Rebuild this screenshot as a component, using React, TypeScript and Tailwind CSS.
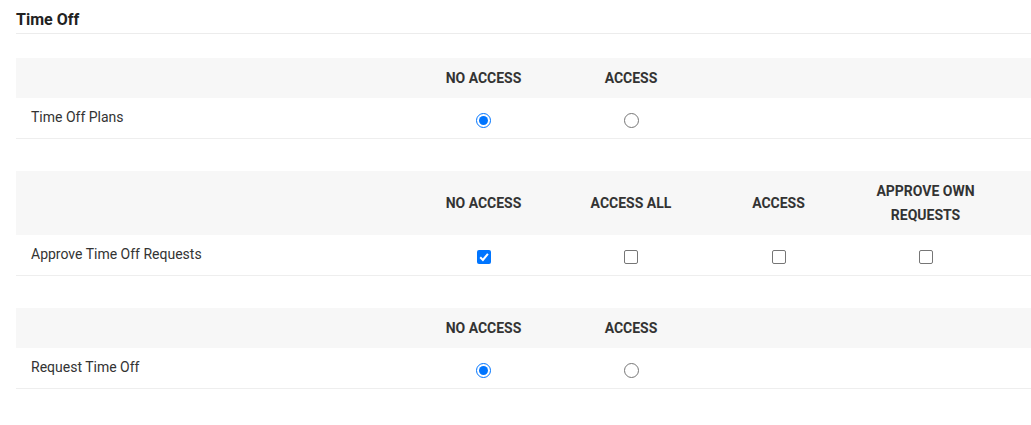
import type { ReactNode } from "react";

type Section = {
  label: string;
  kind: "radio" | "checkbox";
  columns: ReactNode[];
  checked: number;
  tall?: boolean;
};

const sections: Section[] = [
  { label: "Time Off Plans", kind: "radio", columns: ["NO ACCESS", "ACCESS"], checked: 0 },
  {
    label: "Approve Time Off Requests",
    kind: "checkbox",
    columns: [
      "NO ACCESS",
      "ACCESS ALL",
      "ACCESS",
      <>
        APPROVE OWN
        <br />
        REQUESTS
      </>,
    ],
    checked: 0,
    tall: true,
  },
  { label: "Request Time Off", kind: "radio", columns: ["NO ACCESS", "ACCESS"], checked: 0 },
];

function Radio({ on }: { on: boolean }) {
  return on ? (
    <span className="flex h-[15px] w-[15px] items-center justify-center rounded-full border border-[#0075ff] bg-white">
      <span className="h-[9px] w-[9px] rounded-full bg-[#0075ff]" />
    </span>
  ) : (
    <span className="h-[15px] w-[15px] rounded-full border border-[#767676] bg-white" />
  );
}

function Check({ on }: { on: boolean }) {
  return on ? (
    <span className="flex h-[14px] w-[14px] items-center justify-center rounded-[2px] bg-[#0075ff]">
      <svg viewBox="0 0 14 14" className="h-[14px] w-[14px]">
        <path d="M3.2 7.3 L5.9 10 L10.9 3.8" fill="none" stroke="white" strokeWidth="2" />
      </svg>
    </span>
  ) : (
    <span className="h-[14px] w-[14px] rounded-[2px] border border-[#767676] bg-white" />
  );
}

export default function App() {
  return (
    <div className="min-h-[425px] bg-white pl-4 font-['Roboto',sans-serif] text-[#333]">
      <div className="border-b border-[#ececec] pt-[12px] pb-[5px]">
        <h2 className="text-[16px] leading-[16px] font-bold text-[#222]">Time Off</h2>
      </div>

      <div className="mt-6 space-y-8">
        {sections.map((s) => (
          <div key={s.label}>
            <div
              className={
                "grid grid-cols-[394px_147px_148px_147px_147px] items-center bg-[#f7f7f7] text-[14px] font-bold text-[#333] " +
                (s.tall ? "h-16 leading-6" : "h-10 leading-4")
              }
            >
              <div />
              {s.columns.map((c, i) => (
                <div key={i} className="text-center">
                  {c}
                </div>
              ))}
            </div>
            <div className="grid h-[41px] grid-cols-[394px_147px_148px_147px_147px] items-center border-b border-[#eeeeee] text-[14px]">
              <div className="pl-[15px] pb-[2px]">{s.label}</div>
              {s.columns.map((_, i) => (
                <div key={i} className="flex justify-center pt-[4px]">
                  {s.kind === "radio" ? <Radio on={i === s.checked} /> : <Check on={i === s.checked} />}
                </div>
              ))}
            </div>
          </div>
        ))}
      </div>
    </div>
  );
}
